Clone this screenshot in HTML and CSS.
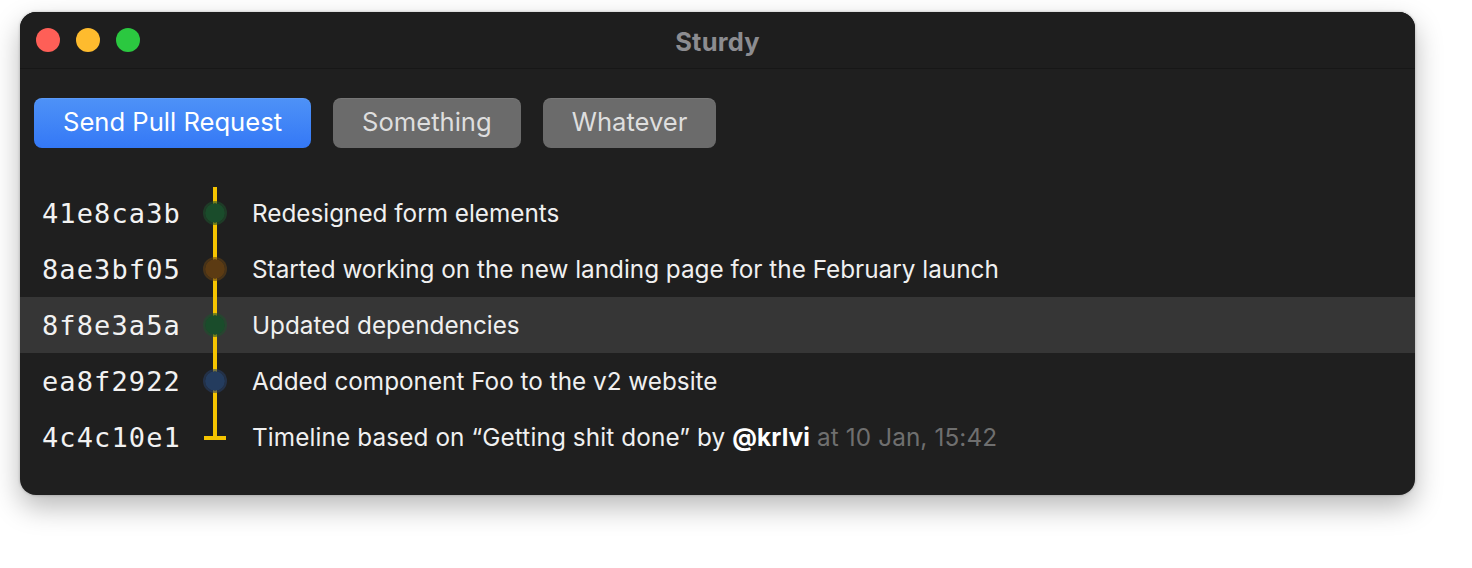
FILE: index.html
```html
<!DOCTYPE html>
<html lang="en">
<head>
<meta charset="utf-8">
<title>Sturdy</title>
<link rel="stylesheet" href="styles.css">
</head>
<body>
<div class="window">
  <div class="titlebar">
    <div class="lights">
      <span class="light red"></span>
      <span class="light yellow"></span>
      <span class="light green"></span>
    </div>
    <div class="title">Sturdy</div>
  </div>
  <div class="content">
    <div class="toolbar">
      <button class="btn primary">Send Pull Request</button>
      <button class="btn">Something</button>
      <button class="btn">Whatever</button>
    </div>
    <div class="commits">
      <div class="row first">
        <div class="hash">41e8ca3b</div>
        <div class="track"><span class="dot dot-green"></span></div>
        <div class="msg">Redesigned form elements</div>
      </div>
      <div class="row">
        <div class="hash">8ae3bf05</div>
        <div class="track"><span class="dot dot-brown"></span></div>
        <div class="msg">Started working on the new landing page for the February launch</div>
      </div>
      <div class="row selected">
        <div class="hash">8f8e3a5a</div>
        <div class="track"><span class="dot dot-green"></span></div>
        <div class="msg">Updated dependencies</div>
      </div>
      <div class="row">
        <div class="hash">ea8f2922</div>
        <div class="track"><span class="dot dot-blue"></span></div>
        <div class="msg">Added component Foo to the v2 website</div>
      </div>
      <div class="row last">
        <div class="hash">4c4c10e1</div>
        <div class="track"><span class="end"></span></div>
        <div class="msg">Timeline based on “Getting shit done” by <strong class="user">@krlvi</strong> <span class="meta">at 10 Jan, 15:42</span></div>
      </div>
    </div>
  </div>
</div>
</body>
</html>
```
FILE: styles.css
```css
* { box-sizing: border-box; }
html, body { margin: 0; padding: 0; background: #ffffff; }
body {
  font-family: Inter, "Noto Sans", sans-serif;
  padding: 12px 0 0 20px;
  min-height: 568px;
}
.window {
  width: 1395px;
  height: 483px;
  background: #1f1f1f;
  border-radius: 16px;
  overflow: hidden;
  box-shadow: 0 12px 28px rgba(0,0,0,0.28), 0 0 3px rgba(0,0,0,0.25);
}
.titlebar {
  height: 57px;
  background: #1e1e1e;
  border-bottom: 1px solid #171717;
  display: flex;
  align-items: center;
  position: relative;
}
.lights {
  display: flex;
  gap: 16px;
  padding-left: 16px;
}
.light {
  width: 24px;
  height: 24px;
  border-radius: 50%;
  display: block;
}
.red { background: #fe5f57; }
.yellow { background: #febb2e; }
.green { background: #2bc840; }
.title {
  position: absolute;
  left: 0;
  right: 0;
  text-align: center;
  font-weight: 700;
  font-size: 25.5px;
  color: #8c8c90;
  letter-spacing: 0.2px;
  padding-top: 2px;
  pointer-events: none;
}
.content {
  padding-top: 29px;
}
.toolbar {
  display: flex;
  gap: 22px;
  padding-left: 14px;
}
.btn {
  font-family: Inter, "Noto Sans", sans-serif;
  height: 50px;
  border: none;
  border-radius: 8px;
  padding: 0 29px 3px;
  font-size: 25.6px;
  color: #dedede;
  background: #6b6b6b;
  box-shadow: inset 0 1px 0 rgba(255,255,255,0.08);
}
.btn.primary {
  color: #ffffff;
  background: linear-gradient(#4e92f7, #3478f6);
}
.commits {
  margin-top: 37px;
}
.row {
  display: flex;
  align-items: center;
  height: 56px;
}
.row.selected { background: #363636; }
.hash {
  width: 175px;
  padding-left: 22px;
  font-family: "DejaVu Sans Mono", "Liberation Mono", monospace;
  font-size: 27px;
  color: #f2f2f2;
  letter-spacing: 1.1px;
  white-space: nowrap;
}
.track {
  width: 40px;
  height: 56px;
  display: flex;
  align-items: center;
  justify-content: center;
  background: linear-gradient(#f5c400, #f5c400) center top / 4px 100% no-repeat;
}
.row.first .track { background-position: center 2px; }
.row.last .track { background-size: 4px 50%; }
.dot {
  width: 24px;
  height: 24px;
  border-radius: 50%;
  border: 2px solid transparent;
  background-clip: padding-box;
}
.dot-green { background-color: #1a4c2b; border-color: rgba(30, 80, 45, 0.6); }
.dot-brown { background-color: #5c3b13; border-color: rgba(100, 65, 20, 0.6); }
.dot-blue { background-color: #243c5e; border-color: rgba(38, 62, 100, 0.6); }
.end {
  width: 22px;
  height: 4px;
  margin-top: 2px;
  background: #f5c400;
}
.msg {
  padding-left: 17px;
  font-size: 24.3px;
  color: #f0f0f0;
  white-space: nowrap;
}
.row.last .msg { letter-spacing: 0.12px; }
.user { font-weight: 700; color: #ffffff; }
.meta { color: #6f6f6f; }
```
